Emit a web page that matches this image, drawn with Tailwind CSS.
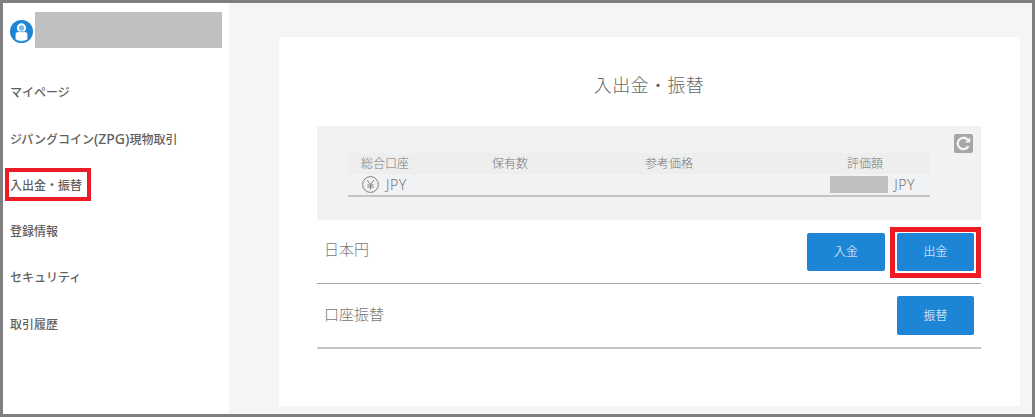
<!DOCTYPE html>
<html lang="ja">
<head>
    <meta charset="UTF-8">
    <title>入出金・振替</title>
    <script src="https://cdn.jsdelivr.net/npm/@tailwindcss/browser@4"></script>
</head>
<body class="font-['Noto_Sans','Noto_Sans_CJK_JP',sans-serif] bg-[#f5f5f5]">
    <div class="relative w-[1035px] h-[417px] border-[3px] border-[#7f7f7f] bg-[#f5f5f5] flex overflow-hidden">
        <!-- sidebar -->
        <aside class="w-[226px] shrink-0 bg-white pl-[7px]">
            <div class="flex items-center gap-[2px] pt-[9px]">
                <svg class="w-[23px] h-[23px] mt-[3px]" viewBox="0 0 24 24">
                    <circle cx="12" cy="12" r="12" fill="#1d85d6"/>
                    <circle cx="12" cy="8.300" r="4.800" fill="#fff"/>
                    <circle cx="12" cy="8.300" r="2.800" fill="#7db8e6"/>
                    <path d="M5.500 20v-4.800c0-1.800 1.400-3 3-3h7c1.600 0 3 1.200 3 3v4.800c-1.800 1.500-4.200 2.200-6.500 2.200s-4.700-.7-6.500-2.200z" fill="#fff" stroke="#1d85d6" stroke-width=".6"/>
                </svg>
                <div class="w-[187px] h-[36px] bg-[#c0c0c0]"></div>
            </div>
            <nav class="mt-[21.500px] text-[12px] font-medium text-[#5f5f5f] leading-[46.200px]">
                <div>マイページ</div>
                <div>ジパングコイン<span class="text-[14px]">(ZPG)</span>現物取引</div>
                <div>入出金・振替</div>
                <div>登録情報</div>
                <div>セキュリティ</div>
                <div>取引履歴</div>
            </nav>
        </aside>

        <!-- main -->
        <main class="flex-1 pl-[50px] pr-[12px] pt-[34px] pb-[8px]">
            <div class="h-full bg-white pl-[38px] pr-[39px]">
                <h1 class="h-[89px] pt-[34px] text-center text-[18px] font-light leading-[28px] tracking-[0.4px] text-[#666]">入出金・振替</h1>

                <section class="relative h-[94px] bg-[#f1f2f4] pt-[27px] pl-[31px]">
                    <button class="absolute right-[8px] top-[8px] w-[19px] h-[19px] rounded-[2px] bg-[#a6a6a6] flex items-center justify-center">
                        <svg class="w-[17px] h-[17px]" viewBox="0 0 24 24" fill="none" stroke="#f4f4f4" stroke-width="3.200">
                            <path d="M19 15.500A8 8 0 1 1 17.500 6.200L20 8.500"/>
                            <path d="M21.500 3v7.500H14z" fill="#f4f4f4" stroke="none"/>
                        </svg>
                    </button>
                    <div class="w-[582px] text-[12px] font-light text-[#777]">
                        <div class="grid grid-cols-[144px_153px_202px_83px] h-[21px] leading-[21px] bg-[#eeeeef]">
                            <span class="pl-[13px]">総合口座</span>
                            <span>保有数</span>
                            <span>参考価格</span>
                            <span>評価額</span>
                        </div>
                        <div class="flex items-center justify-between h-[23px] border-b-2 border-[#c4c4c6] pl-[14px] pr-[15px] text-[14px] tracking-[0.5px]">
                            <span class="flex items-center gap-[7px]">
                                <svg class="w-[17px] h-[17px]" viewBox="0 0 17 17" fill="none" stroke="#808080" stroke-width="1">
                                    <circle cx="8.500" cy="8.500" r="7.900"/>
                                    <path d="M5.200 4.200l3.300 4.300 3.300-4.300M8.500 8.500v5M5.300 9h6.400M5.300 11h6.400"/>
                                </svg>
                                JPY
                            </span>
                            <span class="flex items-center gap-[6px]">
                                <span class="w-[58px] h-[17px] bg-[#c0c0c0]"></span>
                                JPY
                            </span>
                        </div>
                    </div>
                </section>

                <div class="flex items-center justify-between h-[64px] border-b border-[#a8a8a8] pt-[1px] pl-[7px] pr-[7px] text-[15px] font-light text-[#777]">
                    <span class="-mt-[5px]">日本円</span>
                    <div class="flex gap-[12px]">
                        <button class="w-[78px] h-[38px] rounded-[2px] bg-[#1d85d6] text-white text-[12px]">入金</button>
                        <button class="w-[77px] h-[38px] rounded-[2px] bg-[#1d85d6] text-white text-[12px]">出金</button>
                    </div>
                </div>
                <div class="flex items-center justify-between h-[65px] border-b-2 border-[#c4c4c4] pl-[7px] pr-[7px] text-[15px] font-light text-[#777]">
                    <span class="-mt-[2px]">口座振替</span>
                    <button class="w-[77px] h-[39px] rounded-[2px] bg-[#1d85d6] text-white text-[12px]">振替</button>
                </div>
            </div>
        </main>

        <!-- annotation boxes -->
        <div class="absolute left-[2px] top-[165px] w-[86px] h-[33px] border-[4px] border-[#ed1c24]"></div>
        <div class="absolute left-[887px] top-[224px] w-[91px] h-[51px] border-[5px] border-[#ed1c24]"></div>
    </div>
</body>
</html>
